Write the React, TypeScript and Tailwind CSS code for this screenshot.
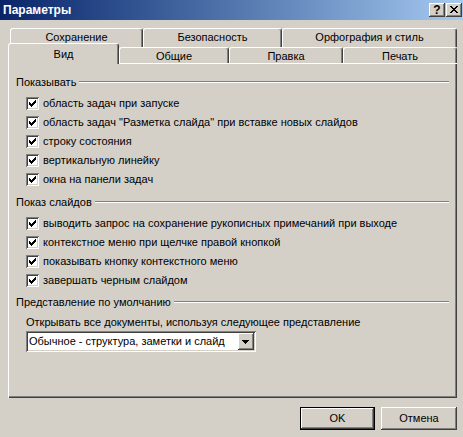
import React from 'react';

const raised =
  'bg-[#d4d0c8] shadow-[inset_-1px_-1px_#404040,inset_1px_1px_#ffffff,inset_-2px_-2px_#808080,inset_2px_2px_#d4d0c8]';
const sunken =
  'shadow-[inset_1px_1px_#808080,inset_-1px_-1px_#ffffff,inset_2px_2px_#404040,inset_-2px_-2px_#d4d0c8]';

function CheckBox() {
  return (
    <span className={`relative w-[13px] h-[13px] bg-white shrink-0 ${sunken}`}>
      <svg width="13" height="13" viewBox="0 0 13 13" className="absolute inset-0" shapeRendering="crispEdges">
        <path
          d="M3 5h1v3H3zM4 6h1v3H4zM5 7h1v3H5zM6 6h1v3H6zM7 5h1v3H7zM8 4h1v3H8zM9 3h1v3H9z"
          fill="#000"
        />
      </svg>
    </span>
  );
}

function CheckRow({ label }: { label: string }) {
  return (
    <div className="flex items-center h-[19px] pl-[18px] gap-[4px] whitespace-nowrap">
      <CheckBox />
      <span>{label}</span>
    </div>
  );
}

function GroupHeader({ title }: { title: string }) {
  return (
    <div className="flex items-center h-[14px] pl-[8px] pr-[8px] gap-[3px]">
      <span className="whitespace-nowrap">{title}</span>
      <div className="flex-1 h-[2px] border-t border-t-[#808080] border-b border-b-white" />
    </div>
  );
}

function Tab({ label, w, selected }: { label: string; w: string; selected?: boolean }) {
  return (
    <div
      className={`${w} ${
        selected ? 'h-[21px] -mb-px pt-[3px] relative z-10' : 'h-full pt-[1px]'
      } bg-[#d4d0c8] rounded-t-[3px] border-t border-l border-white border-r border-r-[#404040] shadow-[inset_-1px_0_#808080] flex justify-center leading-[14px] whitespace-nowrap`}
    >
      {label}
    </div>
  );
}

export default function App() {
  const show = [
    'область задач при запуске',
    'область задач "Разметка слайда" при вставке новых слайдов',
    'строку состояния',
    'вертикальную линейку',
    'окна на панели задач',
  ];
  const slides = [
    'выводить запрос на сохранение рукописных примечаний при выходе',
    'контекстное меню при щелчке правой кнопкой',
    'показывать кнопку контекстного меню',
    'завершать черным слайдом',
  ];

  return (
    <div className="w-[463px] h-[437px] bg-[#d4d0c8] text-black text-[11px] font-['Liberation_Sans',Arial,sans-serif] overflow-hidden">
      {/* title bar */}
      <div className="h-[20px] flex items-center bg-linear-to-r from-[#0a246a] to-[#a6caf0] pl-[3px] pr-[1px]">
        <span className="flex-1 text-white font-bold text-[12px] leading-none">Параметры</span>
        <div className="flex gap-[1px]">
          <div className={`${raised} w-[16px] h-[14px] flex items-center justify-center font-bold text-[12px] leading-none`}>
            ?
          </div>
          <div className={`${raised} w-[16px] h-[14px] relative`}>
            <svg width="16" height="14" viewBox="0 0 16 14" className="absolute inset-0" shapeRendering="crispEdges">
              <path
                d="M4 3h2v1H4zM10 3h2v1h-2zM5 4h2v1H5zM9 4h2v1H9zM6 5h4v1H6zM7 6h2v1H7zM6 7h4v1H6zM5 8h2v1H5zM9 8h2v1H9zM4 9h2v1H4zM10 9h2v1h-2z"
                fill="#000"
              />
            </svg>
          </div>
        </div>
      </div>

      {/* tabs */}
      <div className="mt-[8px] ml-[10px] flex h-[19px]">
        <Tab label="Сохранение" w="w-[133px]" />
        <Tab label="Безопасность" w="w-[139px]" />
        <Tab label="Орфография и стиль" w="w-[175px]" />
      </div>
      <div className="ml-[8px] flex items-end h-[16px]">
        <Tab label="Вид" w="w-[111px]" selected />
        <Tab label="Общие" w="w-[110px]" />
        <Tab label="Правка" w="w-[114px]" />
        <Tab label="Печать" w="w-[114px]" />
      </div>

      {/* panel */}
      <div className="ml-[8px] w-[449px] h-[335px] flex flex-col pt-[12px] shadow-[inset_1px_1px_#ffffff,inset_-1px_-1px_#404040,inset_-2px_-2px_#808080]">
        <GroupHeader title="Показывать" />
        <div className="mt-[5px] flex flex-col">
          {show.map((s) => (
            <CheckRow key={s} label={s} />
          ))}
        </div>
        <div className="mt-[6px]">
          <GroupHeader title="Показ слайдов" />
        </div>
        <div className="mt-[5px] flex flex-col">
          {slides.map((s) => (
            <CheckRow key={s} label={s} />
          ))}
        </div>
        <div className="mt-[5px]">
          <GroupHeader title="Представление по умолчанию" />
        </div>
        <div className="mt-[6px] pl-[18px] h-[14px] leading-[14px] whitespace-nowrap">
          Открывать все документы, используя следующее представление
        </div>
        <div className={`mt-[2px] ml-[18px] w-[230px] h-[21px] bg-white flex items-center pl-[3px] pr-[2px] ${sunken}`}>
          <span className="flex-1 whitespace-nowrap">Обычное - структура, заметки и слайд</span>
          <div className={`${raised} w-[16px] h-[17px] relative`}>
            <svg width="16" height="17" viewBox="0 0 16 17" className="absolute inset-0" shapeRendering="crispEdges">
              <path d="M4 7h7v1H4zM5 8h5v1H5zM6 9h3v1H6zM7 10h1v1H7z" fill="#000" />
            </svg>
          </div>
        </div>
      </div>

      {/* buttons */}
      <div className="mt-[9px] flex justify-end gap-[6px] pr-[6px]">
        <div className="w-[75px] h-[23px] bg-[#d4d0c8] flex items-center justify-center shadow-[inset_0_0_0_1px_#000000,inset_-2px_-2px_#404040,inset_2px_2px_#ffffff,inset_-3px_-3px_#808080]">
          OK
        </div>
        <div className={`${raised} w-[76px] h-[23px] flex items-center justify-center`}>Отмена</div>
      </div>
    </div>
  );
}
